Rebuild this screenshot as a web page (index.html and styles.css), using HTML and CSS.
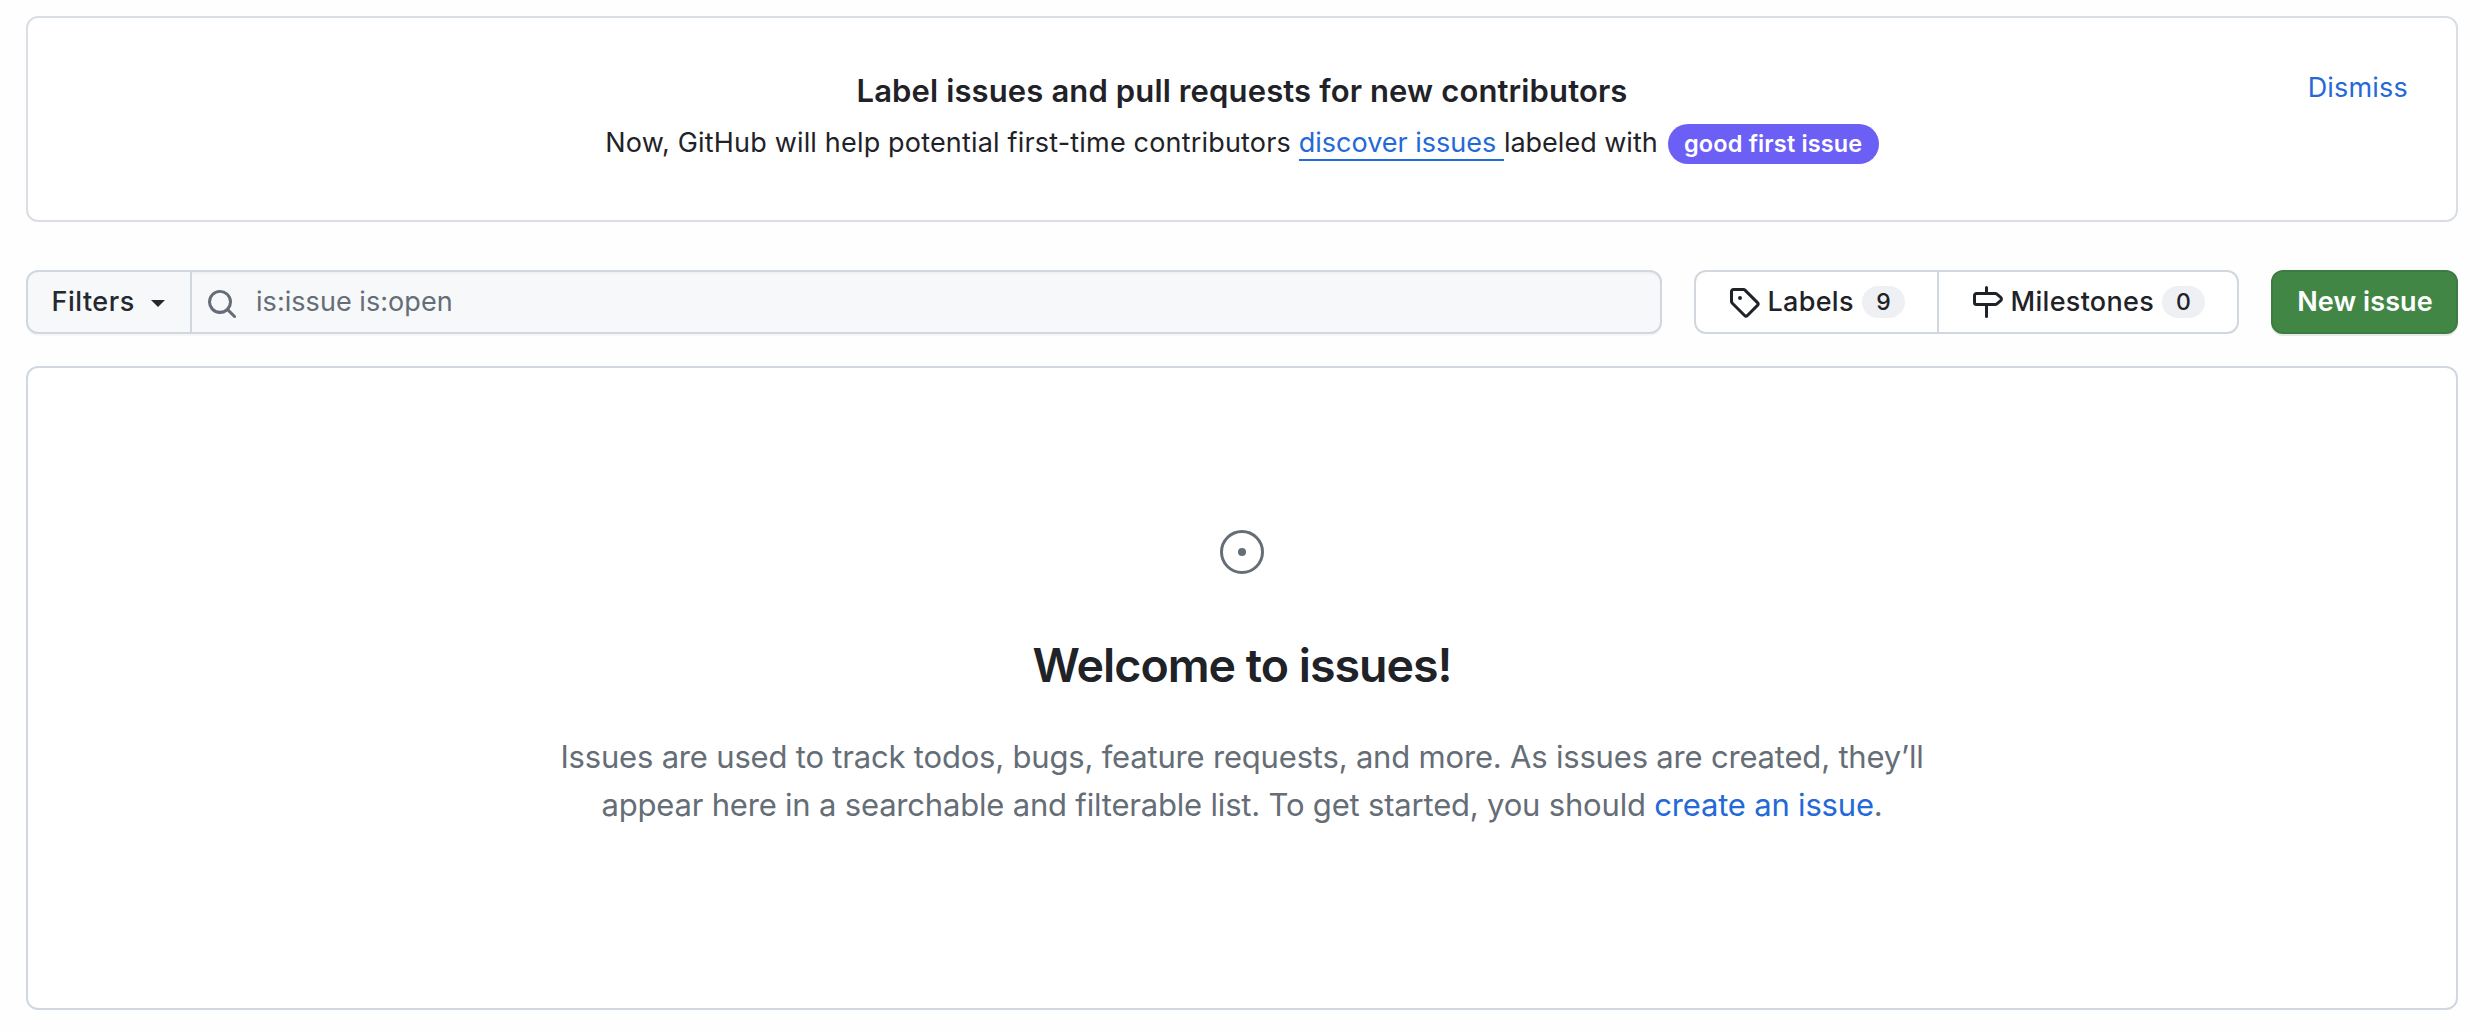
FILE: index.html
```html
<!DOCTYPE html>
<html lang="en">
<head>
<meta charset="utf-8">
<title>Issues</title>
<link rel="stylesheet" href="styles.css">
</head>
<body>
<main class="page">
  <section class="banner">
    <div class="banner-body">
      <h2 class="banner-title">Label issues and pull requests for new contributors</h2>
      <p class="banner-text"><span class="lead">Now, GitHub will help potential first-time contributors </span><a class="discover" href="#">discover issues </a><span>labeled with</span><a class="issue-label" href="#">good first issue</a></p>
    </div>
    <a class="dismiss" href="#">Dismiss</a>
  </section>

  <div class="toolbar">
    <div class="search">
      <button class="filters" type="button">Filters<span class="caret"></span></button>
      <div class="query">
        <svg class="icon search-icon" viewBox="0 0 16 16"><path d="M10.68 11.74a6 6 0 0 1-7.922-8.982 6 6 0 0 1 8.982 7.922l3.04 3.04a.749.749 0 0 1-.326 1.275.749.749 0 0 1-.734-.215ZM11.5 7a4.499 4.499 0 1 0-8.997 0A4.499 4.499 0 0 0 11.5 7Z"/></svg>
        <span>is:issue is:open</span>
      </div>
    </div>
    <nav class="subnav">
      <a class="subnav-item labels" href="#">
        <svg class="icon" viewBox="0 0 16 16"><path d="M1 7.775V2.75C1 1.784 1.784 1 2.75 1h5.025c.464 0 .91.184 1.238.513l6.25 6.25a1.75 1.75 0 0 1 0 2.474l-5.026 5.026a1.75 1.75 0 0 1-2.474 0l-6.25-6.25A1.752 1.752 0 0 1 1 7.775Zm1.5 0c0 .066.026.13.073.177l6.25 6.25a.25.25 0 0 0 .354 0l5.025-5.025a.25.25 0 0 0 0-.354l-6.25-6.25a.25.25 0 0 0-.177-.073H2.75a.25.25 0 0 0-.25.25ZM6 5a1 1 0 1 1 0 2 1 1 0 0 1 0-2Z"/></svg>
        <span>Labels</span>
        <span class="counter">9</span>
      </a>
      <a class="subnav-item milestones" href="#">
        <svg class="icon" viewBox="0 0 16 16"><path d="M7.75 0a.75.75 0 0 1 .75.75V3h3.634c.414 0 .814.147 1.13.414l2.07 1.75a1.75 1.75 0 0 1 0 2.672l-2.07 1.75a1.75 1.75 0 0 1-1.13.414H8.5v5.25a.75.75 0 0 1-1.5 0V10H2.75A1.75 1.75 0 0 1 1 8.25v-3.5C1 3.784 1.784 3 2.75 3H7V.75A.75.75 0 0 1 7.75 0Zm4.384 8.5a.25.25 0 0 0 .161-.06l2.07-1.75a.248.248 0 0 0 0-.38l-2.07-1.75a.25.25 0 0 0-.161-.06H2.75a.25.25 0 0 0-.25.25v3.5c0 .138.112.25.25.25h9.384Z"/></svg>
        <span>Milestones</span>
        <span class="counter">0</span>
      </a>
    </nav>
    <button class="new-issue" type="button">New issue</button>
  </div>

  <section class="blankslate">
    <svg class="blank-icon" viewBox="0 0 24 24"><circle cx="12" cy="12" r="10.25" fill="none" stroke="currentColor" stroke-width="1.5"/><circle cx="12" cy="12" r="2" fill="currentColor"/></svg>
    <h3 class="blank-title">Welcome to issues!</h3>
    <p class="blank-text">Issues are used to track todos, bugs, feature requests, and more. As issues are created, they’ll appear here in a searchable and filterable list. To get started, you should <a href="#">create an issue</a>.</p>
  </section>
</main>
</body>
</html>
```
FILE: styles.css
```css
* {
  box-sizing: border-box;
}

body {
  margin: 0;
  background: #fefefe;
  color: #1f2328;
  font: 400 27px/44px "Inter", "Liberation Sans", sans-serif;
}

h2, h3, p {
  margin: 0;
}

a {
  color: #2469d8;
  text-decoration: none;
}

button {
  margin: 0;
  font: inherit;
  color: inherit;
}

.page {
  padding: 16px 22px 22px 26px;
}

/* Contributor banner */
.banner {
  display: grid;
  grid-template-columns: 1fr auto 1fr;
  align-items: start;
  height: 206px;
  padding: 48px;
  border: 2px solid #d8dee4;
  border-radius: 12px;
  background: #fff;
}

.banner-body {
  grid-column: 2;
}

.banner-title {
  font-size: 31px;
  font-weight: 600;
  line-height: 49px;
  letter-spacing: 0.13px;
  text-align: center;
}

.banner-text {
  display: flex;
  align-items: baseline;
  justify-content: center;
  margin-top: 6px;
  white-space: pre;
}

.lead {
  letter-spacing: 0.18px;
}

.discover {
  line-height: 32px;
  border-bottom: 2px solid #2469d8;
}

.issue-label {
  width: 211px;
  margin-left: 10px;
  border-radius: 20px;
  background: #6b5ff6;
  color: #fff;
  font-size: 23.5px;
  font-weight: 600;
  line-height: 40px;
  letter-spacing: 0.15px;
  text-align: center;
}

.dismiss {
  justify-self: end;
  line-height: 44px;
  letter-spacing: 0.2px;
}

/* Search and navigation row */
.toolbar {
  display: flex;
  gap: 32px;
  height: 64px;
  margin: 48px 0 32px;
}

.search {
  display: flex;
  flex: 1;
  border: 2px solid #d0d7de;
  border-radius: 12px;
  background: #f6f8fa;
  box-shadow: 0 2px 0 rgba(31, 35, 40, 0.03);
}

.filters {
  display: flex;
  align-items: center;
  gap: 16.5px;
  width: 164px;
  padding: 0 0 0 23.5px;
  border: 0;
  border-right: 2px solid #d0d7de;
  border-radius: 10px 0 0 10px;
  background: none;
  color: #24292f;
  font-weight: 500;
  letter-spacing: 0.5px;
}

.caret {
  margin-top: 3px;
  border: 7.5px solid transparent;
  border-top-color: currentColor;
  border-bottom: 0;
}

.query {
  display: flex;
  flex: 1;
  align-items: center;
  gap: 18px;
  padding-left: 14px;
  border-radius: 0 10px 10px 0;
  box-shadow: inset 0 2px 0 rgba(208, 215, 222, 0.2);
  color: #656d76;
  letter-spacing: 0.05px;
}

.icon {
  flex: none;
  width: 32px;
  height: 32px;
  fill: currentColor;
}

.search-icon {
  margin-top: 4px;
}

.subnav {
  display: flex;
  width: 545px;
  border: 2px solid #d0d7de;
  border-radius: 12px;
  background: #fff;
}

.subnav-item {
  display: flex;
  align-items: center;
  gap: 7.5px;
  padding: 0 32px;
  color: #1f2328;
  font-weight: 500;
  letter-spacing: 0.3px;
}

.labels {
  width: 243px;
  border-right: 2px solid #d0d7de;
}

.milestones {
  flex: 1;
}

.counter {
  width: 43px;
  margin-left: auto;
  border-radius: 16px;
  background: #eff0f3;
  font-size: 23px;
  line-height: 32px;
  letter-spacing: 0;
  text-align: center;
}

.new-issue {
  width: 187px;
  padding: 0 0 0 1px;
  border: 2px solid #3d7c41;
  border-radius: 12px;
  background: #428646;
  box-shadow: 0 2px 0 rgba(31, 35, 40, 0.1);
  color: #fff;
  font-weight: 600;
  letter-spacing: 0.1px;
}

/* Empty state */
.blankslate {
  display: flex;
  flex-direction: column;
  align-items: center;
  height: 644px;
  padding-top: 160px;
  border: 2px solid #d0d7de;
  border-radius: 12px;
  background: #fff;
  text-align: center;
}

.blank-icon {
  width: 48px;
  height: 48px;
  color: #656d76;
}

.blank-title {
  margin: 53px 0 32px;
  font-size: 46.5px;
  font-weight: 600;
  line-height: 72px;
  letter-spacing: -1px;
}

.blank-text {
  width: 1400px;
  color: #656d76;
  font-size: 31px;
  line-height: 48px;
  letter-spacing: -0.19px;
}
```
